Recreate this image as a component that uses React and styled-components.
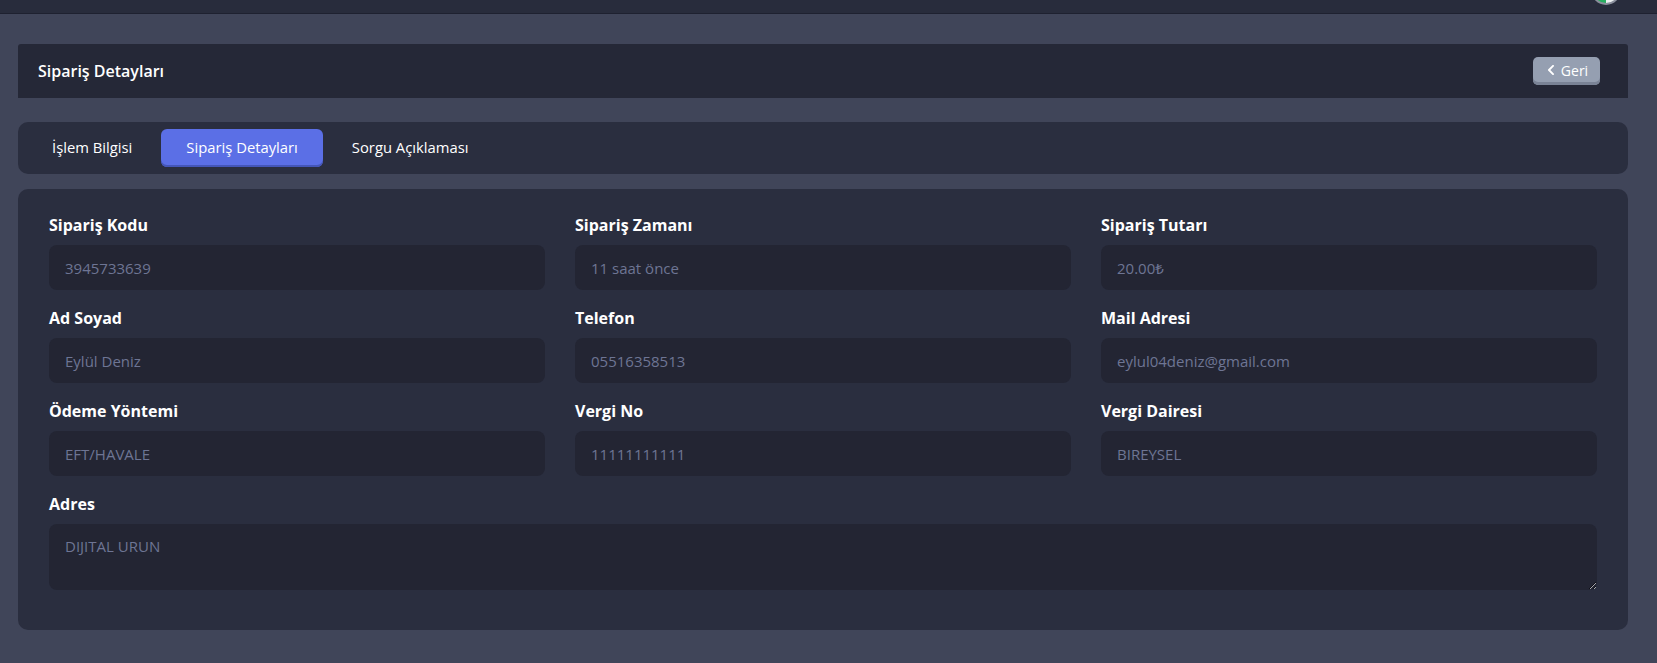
import React, { useState } from 'react';
import styled, { createGlobalStyle } from 'styled-components';
import { FaChevronLeft } from 'react-icons/fa';

const GlobalStyle = createGlobalStyle`
  html, body {
    margin: 0;
    padding: 0;
    background: #404559;
    font-family: 'Open Sans', 'Noto Sans', sans-serif;
  }
  * {
    box-sizing: border-box;
  }
`;

const Page = styled.div`
  min-height: 663px;
  background: #404559;
`;

const Navbar = styled.header`
  height: 14px;
  background: #282c3c;
  border-bottom: 1px solid #1e2130;
  display: flex;
  justify-content: flex-end;
  align-items: flex-start;
  padding-right: 36px;
  overflow: hidden;
`;

const Avatar = styled.div`
  width: 30px;
  height: 30px;
  margin-top: -25px;
  border-radius: 50%;
  background: conic-gradient(#c0392b 0 25%, #ecf0f1 25% 50%, #27ae60 50% 75%, #7f8593 75% 100%);
  border: 2px solid #8a8f9c;
`;

const Main = styled.main`
  padding: 30px 29px 30px 18px;
  display: flex;
  flex-direction: column;
`;

const HeaderCard = styled.div`
  height: 54px;
  background: #252837;
  border-radius: 3px 3px 0 0;
  display: flex;
  align-items: center;
  justify-content: space-between;
  padding: 0 28px 0 20px;
  margin-bottom: 24px;
`;

const Title = styled.h1`
  margin: 0;
  font-size: 16px;
  font-weight: 600;
  color: #ffffff;
`;

const BackButton = styled.button`
  height: 28px;
  width: 67px;
  border: none;
  border-radius: 5px;
  background: #959fb1;
  box-shadow: inset 0 -3px 0 #7a8396;
  color: #ffffff;
  font-family: inherit;
  font-size: 14px;
  display: flex;
  align-items: center;
  justify-content: center;
  gap: 4px;
  padding: 0 0 2px;
  cursor: pointer;

  svg {
    font-size: 12px;
  }
`;

const TabsCard = styled.nav`
  height: 52px;
  background: #2a2e3f;
  border-radius: 10px;
  display: flex;
  align-items: center;
  gap: 4px;
  padding: 0 9px;
  margin-bottom: 15px;
`;

const Tab = styled.button`
  height: 38px;
  padding: 0 25px 2px;
  border: none;
  border-radius: 6px;
  font-family: inherit;
  font-size: 14.8px;
  color: #ffffff;
  cursor: pointer;
  background: ${(p) => (p.$active ? '#5b6fe6' : 'transparent')};
  box-shadow: ${(p) => (p.$active ? 'inset 0 -2px 0 #4456b8' : 'none')};
  white-space: nowrap;
`;

const ContentCard = styled.section`
  background: #2a2e3f;
  border-radius: 10px;
  padding: 24px 31px 24px;
  display: grid;
  grid-template-columns: repeat(3, 1fr);
  column-gap: 30px;
`;

const Field = styled.div`
  display: flex;
  flex-direction: column;
  margin-bottom: 16px;
  grid-column: ${(p) => (p.$wide ? '1 / -1' : 'auto')};
`;

const Label = styled.label`
  font-size: 16px;
  line-height: 24px;
  font-weight: 700;
  color: #ffffff;
  margin-bottom: 8px;
`;

const Input = styled.input`
  height: 45px;
  border: none;
  border-radius: 8px;
  background: #232533;
  color: #6e7594;
  font-family: inherit;
  font-size: 15px;
  padding: 0 16px;
  outline: none;
`;

const TextArea = styled.textarea`
  height: 66px;
  border: none;
  border-radius: 8px;
  background: #232533;
  color: #6e7594;
  font-family: inherit;
  font-size: 15px;
  line-height: 22px;
  padding: 11px 16px;
  outline: none;
  resize: vertical;
`;

const tabs = ['İşlem Bilgisi', 'Sipariş Detayları', 'Sorgu Açıklaması'];

const fields = [
  { label: 'Sipariş Kodu', value: '3945733639' },
  { label: 'Sipariş Zamanı', value: '11 saat önce' },
  { label: 'Sipariş Tutarı', value: '20.00₺' },
  { label: 'Ad Soyad', value: 'Eylül Deniz' },
  { label: 'Telefon', value: '05516358513' },
  { label: 'Mail Adresi', value: 'eylul04deniz@gmail.com' },
  { label: 'Ödeme Yöntemi', value: 'EFT/HAVALE' },
  { label: 'Vergi No', value: '11111111111' },
  { label: 'Vergi Dairesi', value: 'BIREYSEL' },
];

const App = () => {
  const [activeTab, setActiveTab] = useState(1);

  return (
    <Page>
      <GlobalStyle />
      <Navbar>
        <Avatar />
      </Navbar>
      <Main>
        <HeaderCard>
          <Title>Sipariş Detayları</Title>
          <BackButton>
            <FaChevronLeft />
            Geri
          </BackButton>
        </HeaderCard>
        <TabsCard>
          {tabs.map((tab, i) => (
            <Tab key={tab} $active={activeTab === i} onClick={() => setActiveTab(i)}>
              {tab}
            </Tab>
          ))}
        </TabsCard>
        <ContentCard>
          {fields.map((f) => (
            <Field key={f.label}>
              <Label>{f.label}</Label>
              <Input readOnly value={f.value} />
            </Field>
          ))}
          <Field $wide>
            <Label>Adres</Label>
            <TextArea readOnly value="DIJITAL URUN" />
          </Field>
        </ContentCard>
      </Main>
    </Page>
  );
};

export default App;
